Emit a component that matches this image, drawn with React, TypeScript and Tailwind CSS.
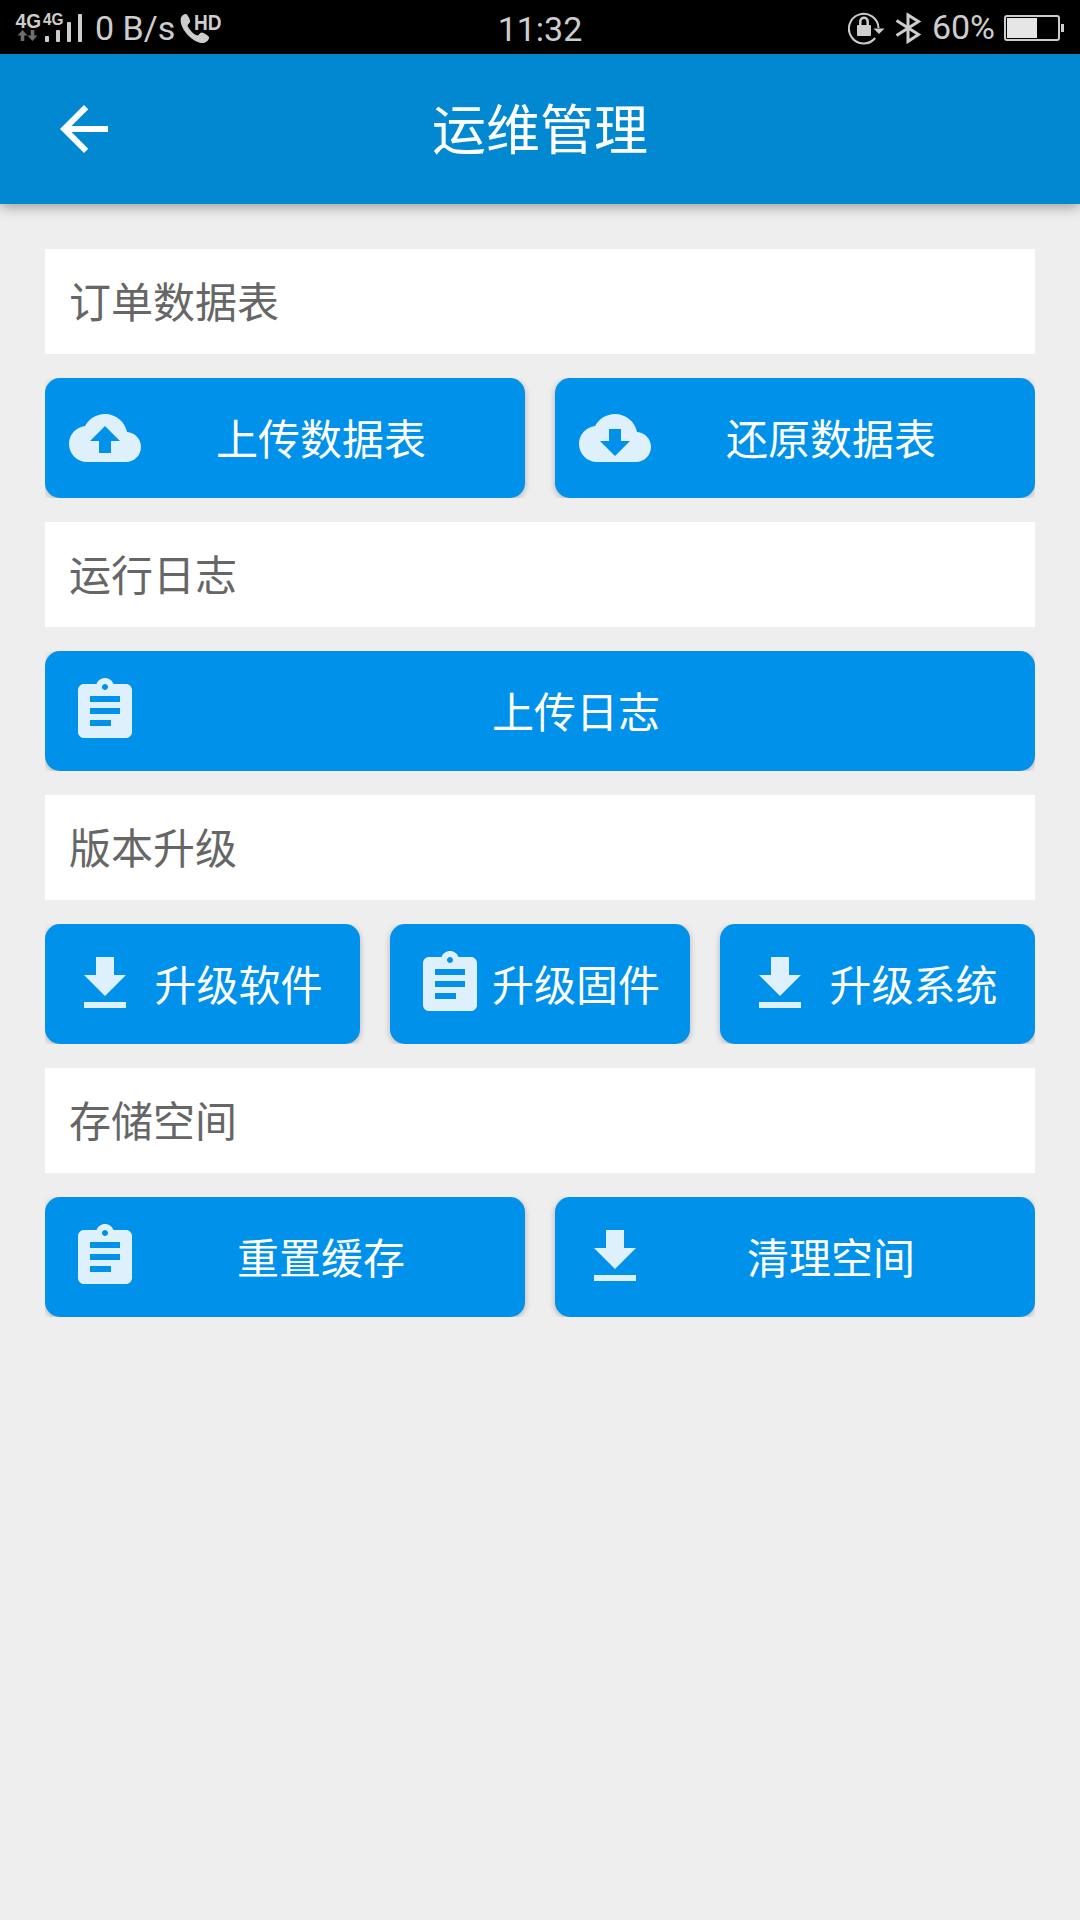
import React from 'react';

const ICONS = {
  cloudUpload:
    'M19.35 10.04C18.67 6.59 15.64 4 12 4 9.11 4 6.6 5.64 5.35 8.04 2.34 8.36 0 10.91 0 14c0 3.31 2.69 6 6 6h13c2.76 0 5-2.24 5-5 0-2.64-2.05-4.78-4.65-4.96zM14 13v4h-4v-4H7l5-5 5 5h-3z',
  cloudDownload:
    'M19.35 10.04C18.67 6.59 15.64 4 12 4 9.11 4 6.6 5.64 5.35 8.04 2.34 8.36 0 10.91 0 14c0 3.31 2.69 6 6 6h13c2.76 0 5-2.24 5-5 0-2.64-2.05-4.78-4.65-4.96zM17 13l-5 5-5-5h3V9h4v4h3z',
  assignment:
    'M19 3h-4.18C14.4 1.84 13.3 1 12 1c-1.3 0-2.4.84-2.82 2H5c-1.1 0-2 .9-2 2v14c0 1.1.9 2 2 2h14c1.1 0 2-.9 2-2V5c0-1.1-.9-2-2-2zm-7 0c.55 0 1 .45 1 1s-.45 1-1 1-1-.45-1-1 .45-1 1-1zm2 14H7v-2h7v2zm3-4H7v-2h10v2zm0-4H7V7h10v2z',
  download: 'M19 9h-4V3H9v6H5l7 7 7-7zM5 18v2h14v-2H5z',
  back: 'M20 11H7.83l5.59-5.59L12 4l-8 8 8 8 1.41-1.41L7.83 13H20v-2z',
};

type IconName = keyof typeof ICONS;

interface Action {
  label: string;
  icon: IconName;
}

interface Section {
  title: string;
  columns: string;
  actions: Action[];
}

const sections: Section[] = [
  {
    title: '订单数据表',
    columns: 'grid-cols-2',
    actions: [
      { label: '上传数据表', icon: 'cloudUpload' },
      { label: '还原数据表', icon: 'cloudDownload' },
    ],
  },
  {
    title: '运行日志',
    columns: 'grid-cols-1',
    actions: [{ label: '上传日志', icon: 'assignment' }],
  },
  {
    title: '版本升级',
    columns: 'grid-cols-[315px_300px_315px]',
    actions: [
      { label: '升级软件', icon: 'download' },
      { label: '升级固件', icon: 'assignment' },
      { label: '升级系统', icon: 'download' },
    ],
  },
  {
    title: '存储空间',
    columns: 'grid-cols-2',
    actions: [
      { label: '重置缓存', icon: 'assignment' },
      { label: '清理空间', icon: 'download' },
    ],
  },
];

const Icon = ({ name, className }: { name: IconName; className?: string }) => (
  <svg viewBox="0 0 24 24" fill="currentColor" className={`size-[72px] shrink-0 ${className ?? ''}`}>
    <path d={ICONS[name]} />
  </svg>
);

const StatusBar = () => (
  <div className="grid h-[54px] grid-cols-3 items-center bg-black font-['Roboto',sans-serif] text-[#cdcdcd]">
    <div className="flex items-center pl-[15px]">
      <svg width="68" height="54" viewBox="0 0 68 54" fill="currentColor">
        <g fontFamily="Liberation Sans" fontWeight="bold">
          <text x="0.500" y="26.800" fontSize="20" textLength="25.500" lengthAdjust="spacingAndGlyphs">4G</text>
          <text x="28" y="24" fontSize="16" textLength="20.500" lengthAdjust="spacingAndGlyphs">4G</text>
        </g>
        <g fill="#6e6e6e">
          <path d="M7.500 29l5 5.500h-3.200v5.500h-3.600v-5.500h-3.200z" />
          <path d="M17.500 40l-5-5.500h3.200v-5.500h3.600v5.500h3.200z" />
        </g>
        <rect x="30" y="35" width="4" height="6" rx="1" />
        <rect x="41" y="29" width="4" height="12" rx="1" />
        <rect x="52" y="21" width="4" height="20" rx="1" />
        <rect x="63" y="13" width="4" height="28" rx="1" />
      </svg>
      <span className="ml-[12px] text-[34px] leading-[54px] whitespace-nowrap">0 B/s</span>
      <svg width="48" height="54" viewBox="0 0 48 54" fill="currentColor" className="ml-[5px]">
        <path d="M1 16.500c1-2 3-3.500 5-3.400 1.500.4 4 5 4.200 7.400 0 1.600-2.400 2.700-2.600 4 .5 3 6.500 9.500 9.800 10 1.600 0 2.500-2.700 4-2.900 2.400-.1 7.400 3.400 7.800 5-.2 2-2.200 4.800-5.200 5.400C14 43.500-2 27 1 16.500z" />
        <text x="14" y="28.800" fontFamily="Liberation Sans" fontWeight="bold" fontSize="21.500" textLength="27.500" lengthAdjust="spacingAndGlyphs">HD</text>
      </svg>
    </div>
    <div className="pt-[2px] text-center text-[34px] leading-[54px]">11:32</div>
    <div className="flex items-center justify-end pr-[16px]">
      <svg width="74" height="54" viewBox="0 0 74 54" fill="none" stroke="currentColor">
        <path d="M30.500 27A14.800 14.800 0 1 0 27.200 37" strokeWidth="2" />
        <path d="M25.500 27.500h11l-5.500 5.500z" fill="currentColor" stroke="none" />
        <rect x="9" y="24" width="14" height="11" rx="1" fill="currentColor" stroke="none" />
        <path d="M12.300 24.500v-4a3.700 3.700 0 0 1 7.400 0v4" strokeWidth="2.500" />
        <path d="M48.500 19.500l22 14-10.500 7V14l10.500 6.500-22 14" strokeWidth="3" />
      </svg>
      <span className="ml-[10px] pb-[2px] text-[34px] leading-[54px]">60%</span>
      <svg width="60" height="54" viewBox="0 0 60 54" fill="none" className="ml-[9px]">
        <rect x="1" y="15" width="54" height="24" rx="2" stroke="#cdcdcd" strokeWidth="2" />
        <rect x="3" y="17" width="30" height="20" fill="#e6e6e6" />
        <rect x="57" y="23" width="3" height="8" fill="#cdcdcd" />
      </svg>
    </div>
  </div>
);

const AppBar = () => (
  <header className="relative grid h-[150px] grid-cols-[1fr_auto_1fr] items-center bg-[#0288d1] px-12 text-white shadow-[0_3px_12px_rgba(0,0,0,0.35)]">
    <button>
      <Icon name="back" />
    </button>
    <h1 className="pb-[5px] text-[54px] leading-[78px]">运维管理</h1>
  </header>
);

const ActionButton = ({ label, icon }: Action) => (
  <button className="flex h-[120px] items-center rounded-[15px] bg-[#0091ea] px-6 text-[42px] text-white shadow-[0_2px_6px_rgba(0,0,0,0.25)]">
    <Icon name={icon} className="opacity-87" />
    <span className="flex-1 pb-[4px] text-center whitespace-nowrap">{label}</span>
  </button>
);

const App = () => {
  return (
    <div className="flex h-[1920px] w-[1080px] flex-col overflow-hidden bg-[#eeeeee] font-['Noto_Sans_CJK_SC',sans-serif]">
      <StatusBar />
      <AppBar />
      <main className="flex flex-col gap-6 p-[45px]">
        {sections.map((section) => (
          <React.Fragment key={section.title}>
            <h2 className="flex h-[105px] items-center bg-white px-6 pb-[4px] text-[42px] text-[#666666]">{section.title}</h2>
            {/* shadows are cut off at the edge of the row */}
            <div className={`grid gap-[30px] overflow-hidden ${section.columns}`}>
              {section.actions.map((action) => (
                <ActionButton key={action.label} {...action} />
              ))}
            </div>
          </React.Fragment>
        ))}
      </main>
    </div>
  );
};

export default App;
